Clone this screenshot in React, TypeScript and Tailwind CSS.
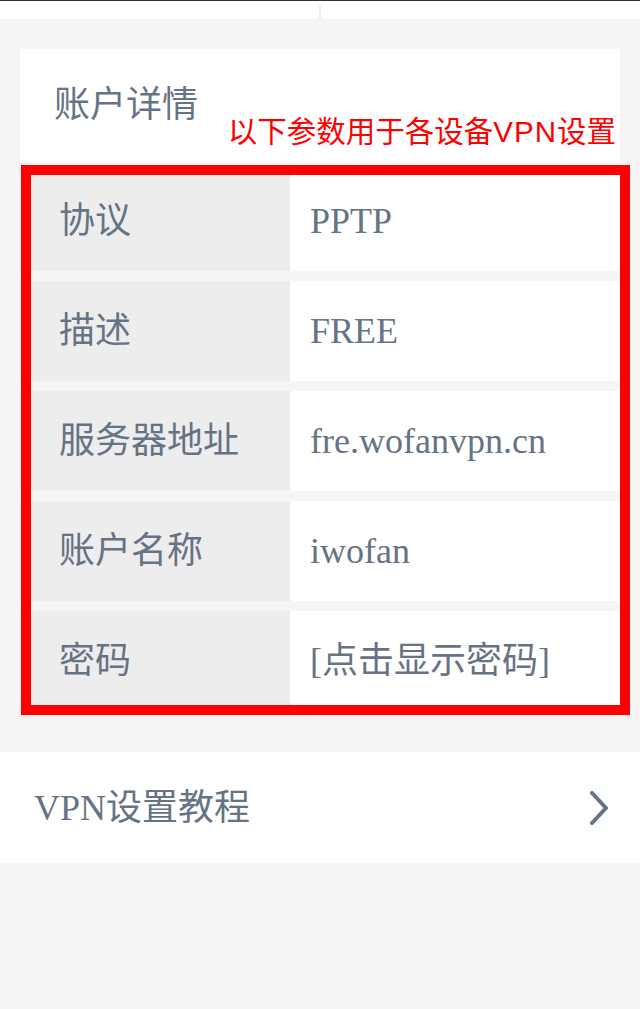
import React from "react";

const rows: [string, string][] = [
  ["协议", "PPTP"],
  ["描述", "FREE"],
  ["服务器地址", "fre.wofanvpn.cn"],
  ["账户名称", "iwofan"],
  ["密码", "[点击显示密码]"],
];

export default function App() {
  return (
    <div
      className="min-h-[1009px] bg-[#f6f5f3] text-[#667384]"
      style={{ fontFamily: '"Liberation Serif", "Noto Sans CJK SC", serif' }}
    >
      <div className="h-[19px] bg-white border-t border-[#333333] flex">
        <div className="flex-1" />
        <div className="w-[2px] mt-[4px] bg-[#ececec]" />
        <div className="flex-1" />
      </div>

      <div className="mx-5 mt-[30px]">
        <div className="relative h-[112px] bg-white flex items-center pl-[34px] text-[36px] leading-none">
          账户详情
          <div
            className="absolute right-[4px] top-[68px] text-[29.5px] leading-none text-[#ff0000] whitespace-nowrap"
            style={{ fontFamily: '"Liberation Sans", "Noto Sans CJK SC", sans-serif' }}
          >
            以下参数用于各设备<span className="tracking-[1px]">VPN</span>设置
          </div>
        </div>

        <div className="relative mt-[10px] flex flex-col gap-[10px]">
          {rows.map(([k, v]) => (
            <div key={k} className="flex h-[100px]">
              <div className="w-[270px] bg-[#eeedee] flex items-center pl-[39px] text-[36px] leading-none">
                {k}
              </div>
              <div className="flex-1 bg-white flex items-center pl-[20px] text-[36px] leading-none">
                {v}
              </div>
            </div>
          ))}
          <div className="absolute top-[-6px] bottom-[-4px] left-[1px] right-[-10px] border-[10px] border-[#ff0000] pointer-events-none" />
        </div>
      </div>

      <div className="mt-[41px] h-[111px] bg-white flex items-center justify-between pl-[34px] pr-[31px]">
        <span className="text-[36px] leading-none">VPN设置教程</span>
        <svg width="20" height="34" viewBox="0 0 20 34" fill="none">
          <polyline
            points="3,2 17,17 3,32"
            stroke="#667384"
            strokeWidth="4"
            strokeLinecap="round"
            strokeLinejoin="round"
          />
        </svg>
      </div>
    </div>
  );
}
